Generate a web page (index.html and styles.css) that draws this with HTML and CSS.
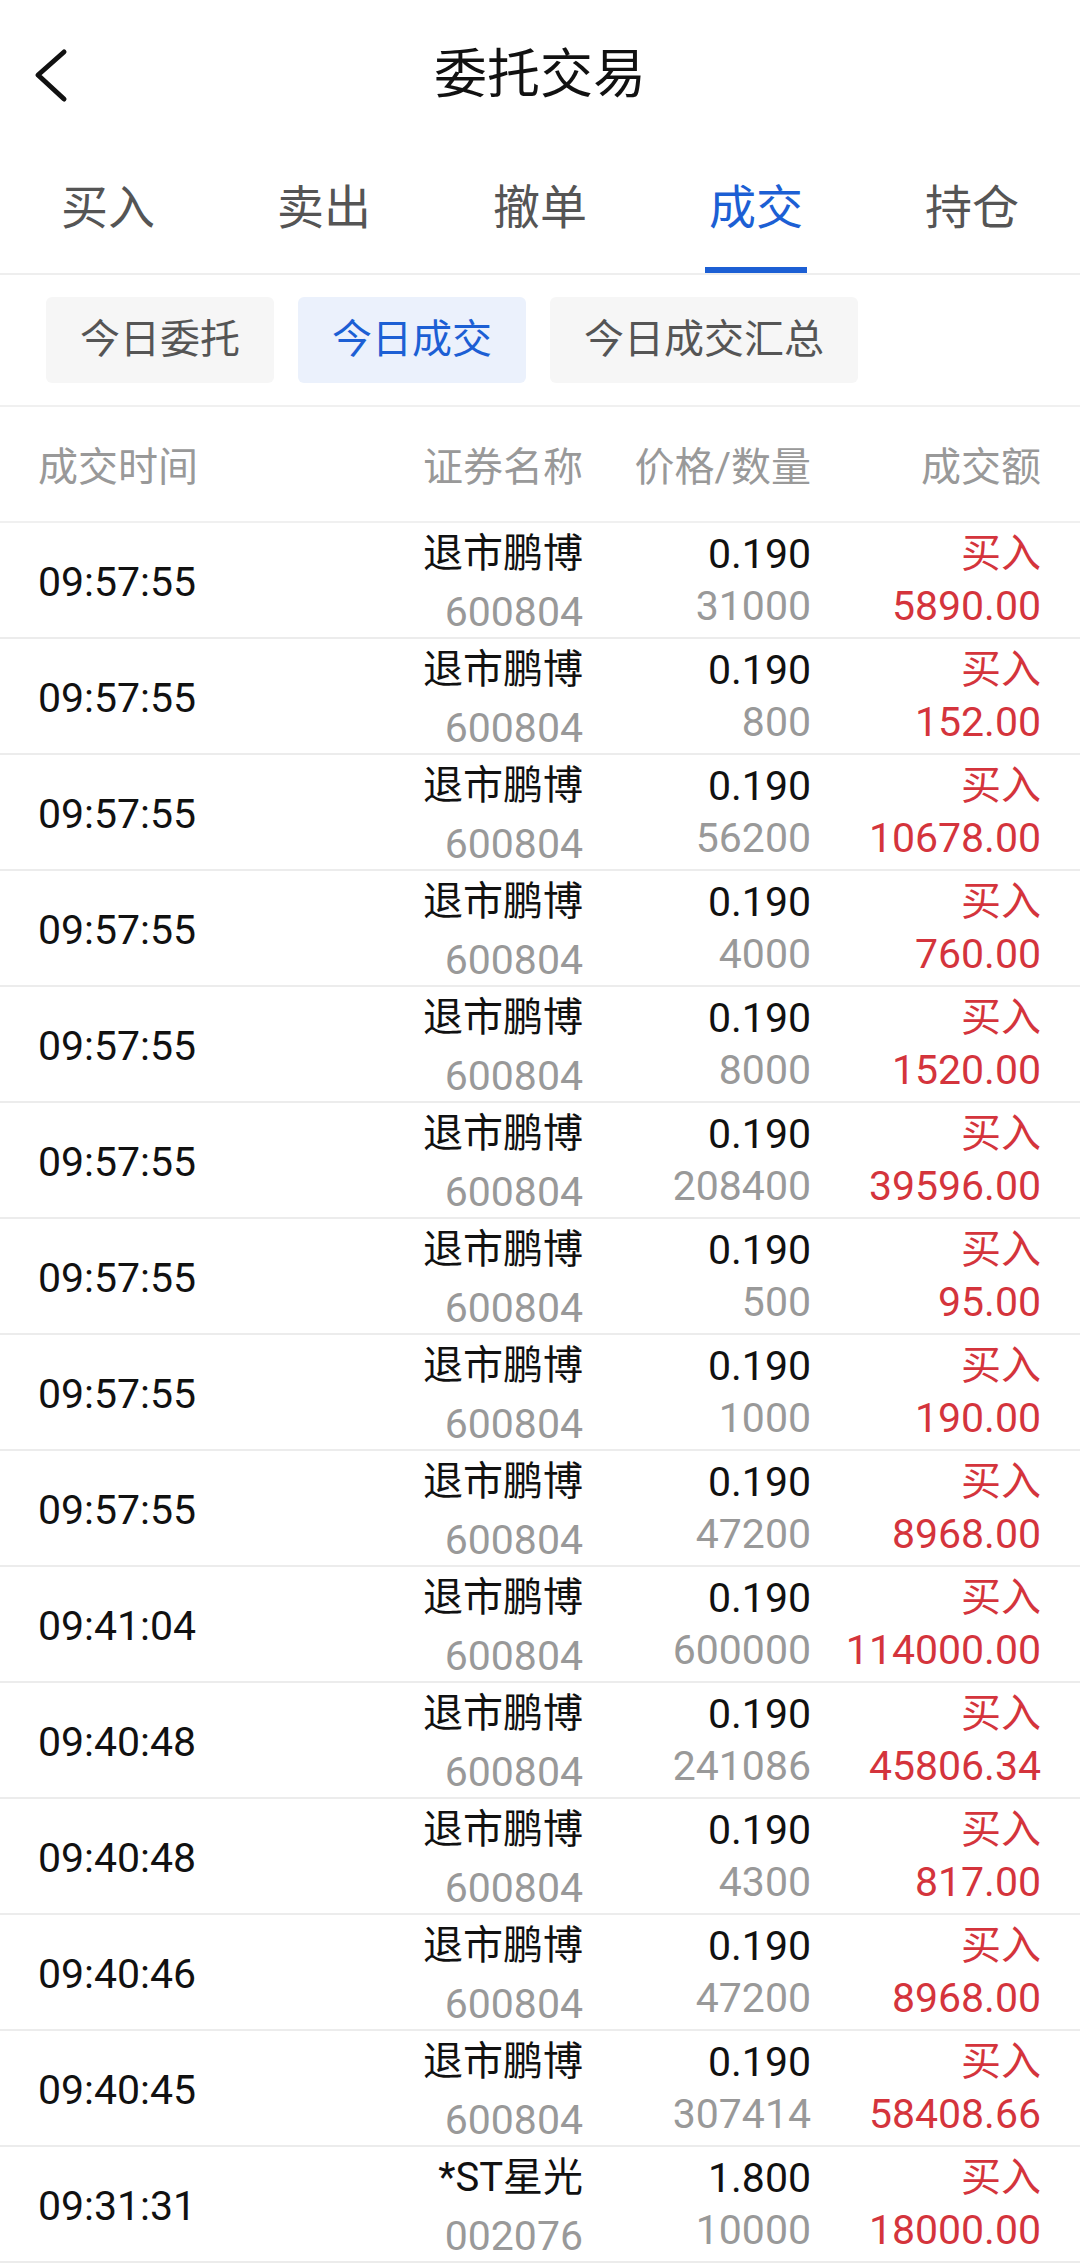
FILE: index.html
```html
<!DOCTYPE html>
<html lang="zh-CN">
<head>
<meta charset="utf-8">
<title>委托交易</title>
<link rel="stylesheet" href="styles.css">
</head>
<body>
<div class="page">
  <header class="nav">
    <div class="nav-left">
      <svg class="back" width="40" height="60" viewBox="0 0 40 60"><path d="M34 7 L8 30 L34 54" fill="none" stroke="#111" stroke-width="5" stroke-linecap="round" stroke-linejoin="round"/></svg>
    </div>
    <div class="nav-title">委托交易</div>
    <div class="nav-right"></div>
  </header>

  <nav class="tabs">
    <div class="tab"><span class="tab-label">买入</span></div>
    <div class="tab"><span class="tab-label">卖出</span></div>
    <div class="tab"><span class="tab-label">撤单</span></div>
    <div class="tab active"><span class="tab-label">成交</span></div>
    <div class="tab"><span class="tab-label">持仓</span></div>
  </nav>

  <div class="subtabs">
    <div class="chip">今日委托</div>
    <div class="chip selected">今日成交</div>
    <div class="chip">今日成交汇总</div>
  </div>

  <div class="thead">
    <div class="c-time">成交时间</div>
    <div class="c-name">证券名称</div>
    <div class="c-price">价格/数量</div>
    <div class="c-amt">成交额</div>
  </div>

  <div class="list" id="list"></div>
</div>
<script src="app.js"></script>
</body>
</html>
```

FILE: app.js
```js
var rows = [
  ["09:57:55","退市鹏博","600804","0.190","31000","5890.00"],
  ["09:57:55","退市鹏博","600804","0.190","800","152.00"],
  ["09:57:55","退市鹏博","600804","0.190","56200","10678.00"],
  ["09:57:55","退市鹏博","600804","0.190","4000","760.00"],
  ["09:57:55","退市鹏博","600804","0.190","8000","1520.00"],
  ["09:57:55","退市鹏博","600804","0.190","208400","39596.00"],
  ["09:57:55","退市鹏博","600804","0.190","500","95.00"],
  ["09:57:55","退市鹏博","600804","0.190","1000","190.00"],
  ["09:57:55","退市鹏博","600804","0.190","47200","8968.00"],
  ["09:41:04","退市鹏博","600804","0.190","600000","114000.00"],
  ["09:40:48","退市鹏博","600804","0.190","241086","45806.34"],
  ["09:40:48","退市鹏博","600804","0.190","4300","817.00"],
  ["09:40:46","退市鹏博","600804","0.190","47200","8968.00"],
  ["09:40:45","退市鹏博","600804","0.190","307414","58408.66"],
  ["09:31:31","*ST星光","002076","1.800","10000","18000.00"]
];
var html = "";
rows.forEach(function (r) {
  html += '<div class="row">' +
    '<div class="c-time time">' + r[0] + '</div>' +
    '<div class="c-name stack name-stack"><div class="l1">' + r[1] + '</div><div class="l2 sub">' + r[2] + '</div></div>' +
    '<div class="c-price stack num-stack"><div class="l1">' + r[3] + '</div><div class="l2 sub">' + r[4] + '</div></div>' +
    '<div class="c-amt stack num-stack red"><div class="l1">买入</div><div class="l2">' + r[5] + '</div></div>' +
    '</div>';
});
document.getElementById("list").innerHTML = html;
```

FILE: styles.css
```css
* { box-sizing: border-box; }
html, body { margin: 0; padding: 0; background: #fff; }
body {
  font-family: Roboto, "Noto Sans CJK SC", sans-serif;
  color: #111;
  width: 1080px;
  overflow: hidden;
}
.page { width: 1080px; }

.nav {
  height: 150px;
  display: grid;
  grid-template-columns: 1fr auto 1fr;
  align-items: center;
}
.nav-left { display: flex; align-items: center; padding-left: 30px; }
.back { display: block; }
.nav-title {
  font-size: 53px;
  line-height: 150px;
  color: #111;
}

.tabs {
  display: flex;
  padding-top: 35px;
  border-bottom: 2px solid #eeeeee;
}
.tab {
  flex: 1;
  display: flex;
  justify-content: center;
}
.tab-label {
  font-size: 47px;
  line-height: 46px;
  color: #555;
  padding: 0 4px 36px;
  border-bottom: 6px solid transparent;
}
.tab.active .tab-label {
  color: #1c5fd4;
  border-bottom-color: #1c5fd4;
}

.subtabs {
  display: flex;
  gap: 24px;
  padding: 22px 46px;
  border-bottom: 2px solid #f0f0f0;
}
.chip {
  height: 86px;
  line-height: 86px;
  padding: 0 34px;
  font-size: 40px;
  color: #555;
  background: #f6f6f6;
  border-radius: 6px;
}
.chip.selected {
  background: #ebf1fc;
  color: #1c5fd4;
}

.thead, .row {
  display: grid;
  grid-template-columns: 1fr 260px 228px 230px;
  padding: 0 39px 0 38px;
}
.thead {
  height: 116px;
  align-items: center;
  font-size: 40px;
  color: #999;
  border-bottom: 2px solid #f0f0f0;
}
.c-time { text-align: left; }
.c-name, .c-price, .c-amt { text-align: right; }

.row {
  height: 116px;
  border-bottom: 2px solid #ececec;
  font-size: 41px;
}
.time {
  align-self: center;
  color: #111;
  line-height: 50px;
}
.stack { padding-top: 2px; }
.stack .l1 { line-height: 58px; white-space: nowrap; }
.name-stack .l1 { font-size: 40px; }
.name-stack .l2 { line-height: 58px; }
.num-stack .l2 { line-height: 47px; }
.sub { color: #999; }
.red { color: #d4343c; }
.red .l1 { font-size: 40px; }
```
